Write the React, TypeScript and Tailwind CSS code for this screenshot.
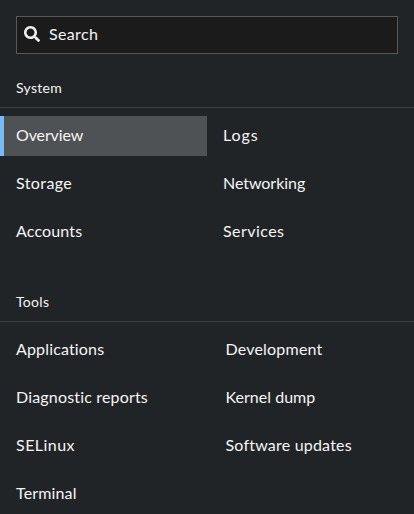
import { FaSearch } from "react-icons/fa";

type Item = { label: string; tracking: string; active?: boolean };

const system: Item[] = [
  { label: "Overview", tracking: "tracking-[-0.12px]", active: true },
  { label: "Logs", tracking: "tracking-[0.9px]" },
  { label: "Storage", tracking: "tracking-[0.4px]" },
  { label: "Networking", tracking: "tracking-[-0.05px]" },
  { label: "Accounts", tracking: "tracking-[0.14px]" },
  { label: "Services", tracking: "tracking-[0.45px]" },
];

const tools: Item[] = [
  { label: "Applications", tracking: "tracking-[0.16px]" },
  { label: "Development", tracking: "tracking-[0.2px]" },
  { label: "Diagnostic reports", tracking: "tracking-[0.17px]" },
  { label: "Kernel dump", tracking: "tracking-[0.02px]" },
  { label: "SELinux", tracking: "tracking-[0.45px]" },
  { label: "Software updates", tracking: "tracking-[0.2px]" },
  { label: "Terminal", tracking: "tracking-[0.15px]" },
];

function NavSection({ title, items, columns }: { title: string; items: Item[]; columns: string }) {
  return (
    <section>
      <h2 className="h-[38px] border-b border-[#3c3f42] px-4 pt-[7px] text-sm leading-[21px] tracking-[0.3px]">{title}</h2>
      <ul className={`mt-2 grid gap-y-2 ${columns}`}>
        {items.map((item) => (
          <li key={item.label}>
            <a
              href="#"
              className={`flex h-10 items-center whitespace-nowrap border-l-4 pb-0.5 pl-3 text-base ${item.tracking} ${
                item.active ? "border-[#73bcf7] bg-[#4f5255]" : "border-transparent"
              }`}
            >
              {item.label}
            </a>
          </li>
        ))}
      </ul>
    </section>
  );
}

export default function App() {
  return (
    <nav className="h-[514px] w-[414px] overflow-hidden bg-[#212427] pt-4 font-['Lato',sans-serif] text-[#f5f5f5]">
      <div className="mx-4 mb-4 flex h-[38px] items-center border border-[#57585a] bg-[#1b1b1b] pl-[7px]">
        <FaSearch size={16} className="mb-0.5 text-[#f0f0f0]" />
        <span className="mb-0.5 ml-[9px] text-base tracking-[0.35px]">Search</span>
      </div>
      <NavSection title="System" items={system} columns="grid-cols-[207px_207px]" />
      <div className="h-8" />
      <NavSection title="Tools" items={tools} columns="grid-cols-[209.5px_204.5px]" />
    </nav>
  );
}
